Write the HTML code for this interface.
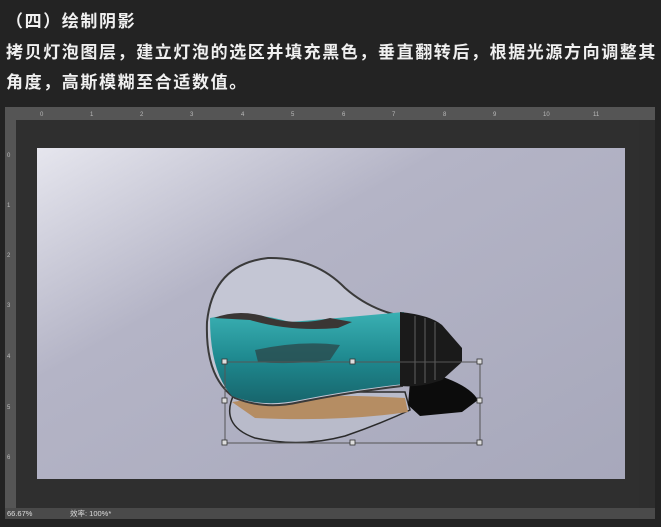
<!DOCTYPE html>
<html><head><meta charset="utf-8"><style>
body{margin:0;width:661px;height:527px;background:#232323;overflow:hidden;position:relative;font-family:"Liberation Sans","Noto Sans CJK SC",sans-serif}
.t{position:absolute;left:6px;color:#f0f0f0;font-size:17px;font-weight:bold;letter-spacing:1.6px;white-space:nowrap}
</style></head><body>
<div class="t" style="top:7px">（四）绘制阴影</div>
<div class="t" style="top:38px">拷贝灯泡图层，建立灯泡的选区并填充黑色，垂直翻转后，根据光源方向调整其</div>
<div class="t" style="top:68px">角度，高斯模糊至合适数值。</div>
<svg style="position:absolute;left:0;top:0" width="661" height="527">
<defs>
<linearGradient id="bg" x1="0" y1="0" x2="1" y2="1"><stop offset="0" stop-color="#e6e6ee"/><stop offset="0.35" stop-color="#b4b4c6"/><stop offset="1" stop-color="#a7a8bb"/></linearGradient>
<linearGradient id="w" x1="0" y1="0" x2="0" y2="1"><stop offset="0" stop-color="#3ab0b3"/><stop offset="0.5" stop-color="#1f8a90"/><stop offset="1" stop-color="#17656c"/></linearGradient>
</defs>
<rect x="5" y="107" width="650" height="412" fill="#2e2e2e"/>
<rect x="5" y="107" width="650" height="13" fill="#555"/>
<rect x="5" y="107" width="11" height="401" fill="#555"/>
<g fill="#bbb" font-size="6" font-family="Liberation Sans">
<text x="40" y="116">0</text><text x="90" y="116">1</text><text x="140" y="116">2</text><text x="190" y="116">3</text><text x="241" y="116">4</text><text x="291" y="116">5</text><text x="342" y="116">6</text><text x="392" y="116">7</text><text x="443" y="116">8</text><text x="493" y="116">9</text><text x="543" y="116">10</text><text x="593" y="116">11</text>
<text x="7" y="157">0</text><text x="7" y="207">1</text><text x="7" y="257">2</text><text x="7" y="307">3</text><text x="7" y="358">4</text><text x="7" y="409">5</text><text x="7" y="459">6</text>
</g>
<rect x="16" y="120" width="623" height="388" fill="#2f2f2f"/>
<rect x="37" y="148" width="588" height="331" fill="url(#bg)"/>
<rect x="5" y="508" width="650" height="11" fill="#4a4a4a"/>
<text x="7" y="516" fill="#ddd" font-size="7.5" font-family="Liberation Sans">66.67%</text>
<text x="70" y="516" fill="#ddd" font-size="7.5" font-family="Liberation Sans,Noto Sans CJK SC">效率: 100%*</text>
<!-- reflection -->
<path d="M235 392 Q218 425 255 438 Q300 448 345 436 Q380 424 410 410 L405 392 Z" fill="#b9bbca" stroke="#2a2a2a" stroke-width="1.5"/>
<!-- sand -->
<path d="M232 402 Q300 392 405 398 L408 412 Q340 422 255 418 Z" fill="#b58d63"/>
<!-- shadow -->
<path d="M410 382 L440 376 Q470 386 478 400 L462 412 L420 416 L408 405 Z" fill="#0c0c0c"/>
<!-- glass -->
<path d="M402 316 Q370 310 345 288 Q315 257 268 258 Q213 264 207 322 Q205 378 235 398 Q265 410 300 402 Q350 392 402 386 Z" fill="#c4c6d4" stroke="#3a3a3a" stroke-width="2"/>
<!-- water -->
<path d="M210 318 Q250 310 290 322 Q340 318 404 312 L404 384 Q350 390 300 400 Q262 408 232 396 Q210 372 210 318 Z" fill="url(#w)"/>
<path d="M214 318 Q240 308 270 318 Q300 326 330 318 L352 322 L338 328 Q290 332 250 320 Z" fill="#3a3634"/>
<path d="M255 350 Q300 340 340 345 L330 360 Q290 365 258 362 Z" fill="#2b4a4c" opacity="0.8"/>
<!-- cap -->
<path d="M400 312 Q430 315 442 325 L462 348 L462 362 L442 380 Q420 388 400 386 Z" fill="#1a1a1a"/>
<g stroke="#555" stroke-width="1.2"><line x1="415" y1="316" x2="415" y2="384"/><line x1="425" y1="318" x2="425" y2="383"/><line x1="435" y1="322" x2="435" y2="380"/></g>
<!-- selection -->
<rect x="225" y="362" width="255" height="81" fill="none" stroke="#555" stroke-width="1"/>
<g fill="#ddd" stroke="#333" stroke-width="0.8">
<rect x="222" y="359" width="5" height="5"/><rect x="350" y="359" width="5" height="5"/><rect x="477" y="359" width="5" height="5"/>
<rect x="222" y="398" width="5" height="5"/><rect x="477" y="398" width="5" height="5"/>
<rect x="222" y="440" width="5" height="5"/><rect x="350" y="440" width="5" height="5"/><rect x="477" y="440" width="5" height="5"/>
</g>
</svg>
</body></html>
